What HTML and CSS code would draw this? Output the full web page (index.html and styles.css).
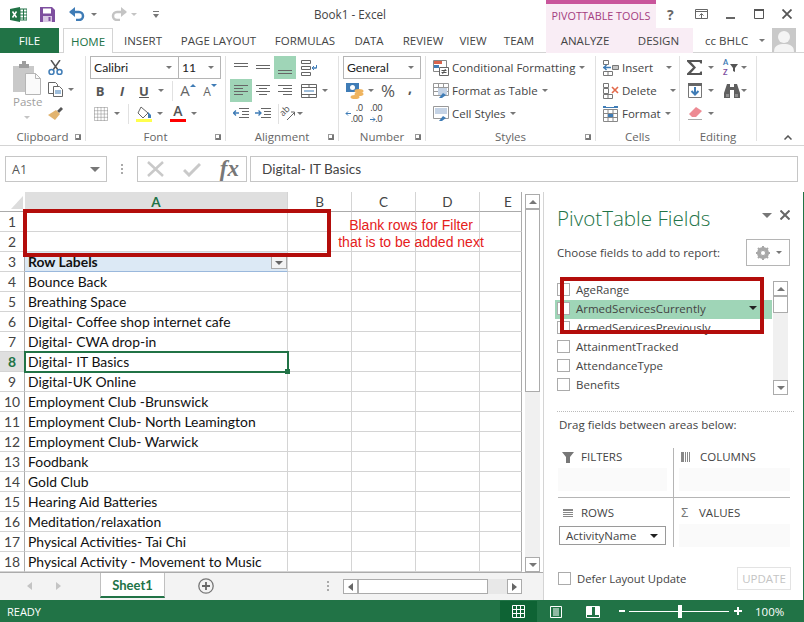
FILE: index.html
```html
<!DOCTYPE html>
<html lang="en">
<head>
<meta charset="utf-8">
<title>Book1 - Excel</title>
<link rel="stylesheet" href="styles.css">
</head>
<body>
<div class="app">
  <header class="titlebar">
    <div class="qat">
      <svg class="q-logo" width="17" height="15" viewBox="0 0 17 15"><path d="M0 2 10 0v15L0 13z" fill="#217346"/><path d="M10 2h7v11h-7z" fill="#fff" stroke="#217346"/><path d="M10 5h7M10 8h7M10 11h7M13.5 2v11" stroke="#217346"/><path d="M2.5 4.5l4 6M6.5 4.5l-4 6" stroke="#fff" stroke-width="1.5"/></svg>
      <svg class="q-save" width="15" height="15" viewBox="0 0 15 15"><path d="M0 0h12l3 3v12H0z" fill="#7e4f9f"/><path d="M3 1.5h8v5H3z" fill="#fff"/><path d="M3 9h9v6H3z" fill="#d9c9e4"/><path d="M8.500 10h2v4h-2z" fill="#7e4f9f"/></svg>
      <svg class="q-undo" width="16" height="14" viewBox="0 0 16 14"><path d="M1.500 5H10a4 4 0 0 1 0 8H7" fill="none" stroke="#3f7cb6" stroke-width="2.500"/><path d="M6 0v10L0 5z" fill="#3f7cb6"/></svg>
      <span class="car q-car1"></span>
      <svg class="q-redo" width="16" height="14" viewBox="0 0 16 14"><path d="M14.500 5H6a4 4 0 0 0 0 8h3" fill="none" stroke="#c4c4c4" stroke-width="2.500"/><path d="M10 0v10l6-5z" fill="#c4c4c4"/></svg>
      <span class="car light q-car2"></span>
      <svg class="q-cust" width="6" height="7" viewBox="0 0 6 7"><path d="M0 0h6v1H0z" fill="#777"/><path d="M0 3h6L3 7z" fill="#777"/></svg>
      <span class="doc-title">Book1 - Excel</span>
    </div>
    <div class="ctx-head"><span>PIVOTTABLE TOOLS</span></div>
    <div class="winctl">
      <span class="help">?</span>
      <svg width="13" height="10" viewBox="0 0 13 10"><path d="M.5.500h12v9H.5zM.5 2.500h12" fill="none" stroke="#666"/><path d="M6.500 9V5M4.500 6.500l2-2 2 2" fill="none" stroke="#666"/></svg>
      <svg width="9" height="10" viewBox="0 0 9 10"><path d="M0 8h9v2H0z" fill="#666"/></svg>
      <svg width="10" height="10" viewBox="0 0 10 10"><path d="M.5.500h9v9h-9z" fill="none" stroke="#555"/><path d="M0 0h10v2H0z" fill="#555"/></svg>
      <svg width="10" height="10" viewBox="0 0 10 10"><path d="M.5.500l9 9M9.500.500l-9 9" stroke="#555" stroke-width="1.800"/></svg>
    </div>
  </header>

  <nav class="tabs">
    <span class="tab file">FILE</span>
    <span></span>
    <span class="tab home">HOME</span>
    <span class="tab">INSERT</span>
    <span class="tab">PAGE LAYOUT</span>
    <span class="tab">FORMULAS</span>
    <span class="tab">DATA</span>
    <span class="tab">REVIEW</span>
    <span class="tab">VIEW</span>
    <span class="tab">TEAM</span>
    <span class="tab ctx">ANALYZE</span>
    <span class="tab ctx">DESIGN</span>
    <div class="account">
      <span>cc BHLC</span><span class="car acc-car"></span>
      <svg width="24" height="24" viewBox="0 0 24 24"><path d="M0 0h24v24H0z" fill="#c9c9c9"/><circle cx="12" cy="9" r="6" fill="#f4f4f4"/><path d="M2 24c0-7 5-8 10-8s10 1 10 8z" fill="#f4f4f4"/></svg>
    </div>
  </nav>

  <section class="ribbon">
    <div class="grp g-clip">
      <div class="body clip">
        <div class="paste">
          <svg width="28" height="34" viewBox="0 0 28 34"><path d="M0 5h21v26H0z" fill="#c9c9c9"/><path d="M6 3h3V0h4v3h3v4H6z" fill="#9d9d9d"/><path d="M12.500 12.500h10l5 5v16h-15z" fill="#fafafa" stroke="#b5b5b5"/><path d="M22.500 12.500v5h5" fill="none" stroke="#b5b5b5"/></svg>
          <span class="paste-l">Paste</span>
          <span class="car light"></span>
        </div>
        <div class="clip-small">
          <svg class="cs1" width="15" height="15" viewBox="0 0 15 15"><path d="M3 0l7 10M12 0L5 10" stroke="#555" stroke-width="1.500"/><circle cx="3.500" cy="12" r="2.500" fill="#fff" stroke="#3f7cb6" stroke-width="1.500"/><circle cx="11.500" cy="12" r="2.500" fill="#fff" stroke="#3f7cb6" stroke-width="1.500"/></svg>
          <div class="cs2"><svg width="15" height="15" viewBox="0 0 15 15"><path d="M.5.500h7l2 2v9h-9z" fill="#fff" stroke="#666"/><path d="M5.500 4.500h6l3 3v7h-9z" fill="#fff" stroke="#666"/><path d="M7 9h6M7 11h6" stroke="#3f7cb6"/></svg><span class="car"></span></div>
          <svg class="cs3" width="16" height="14" viewBox="0 0 16 14"><path d="M9 5l4-4 2 2-4 4z" fill="#555"/><path d="M0 9l8-5 4 4-5 6z" fill="#e2b46f"/></svg>
        </div>
      </div>
      <div class="glabel">Clipboard<span class="launch"></span></div>
    </div>

    <div class="grp g-font">
      <div class="body rows p3">
        <div class="r selects"><span class="sel s-font">Calibri<i class="car"></i></span><span class="sel s-size">11<i class="car"></i></span></div>
        <div class="r">
          <span class="i w22 t-b">B</span><span class="i w22 t-i">I</span><span class="i w22 t-u">U</span><span class="i w12"><i class="car"></i></span><span class="w5"></span><span class="sep"></span><span class="w4"></span>
          <span class="i w22 t-a">A<svg width="6" height="3" viewBox="0 0 6 3"><path d="M0 3h6L3 0z" fill="#3f7cb6"/></svg></span>
          <span class="i w22 t-a small">A<svg width="6" height="3" viewBox="0 0 6 3"><path d="M0 0h6L3 3z" fill="#3f7cb6"/></svg></span>
        </div>
        <div class="r">
          <span class="i w24"><svg width="14" height="14" viewBox="0 0 14 14"><path d="M.5.500h13v13H.5zM.5 7h13M7 .5v13M3.700.5v13M10.300.5v13M.5 3.700h13M.5 10.300h13" fill="none" stroke="#888" stroke-dasharray="1 1"/></svg></span>
          <span class="i w8"><i class="car"></i></span><span class="w7"></span><span class="sep"></span><span class="w7"></span>
          <span class="i w16"><svg width="16" height="16" viewBox="0 0 16 16"><path d="M5 1l7 6-5 5-5-5z" fill="#fff" stroke="#666"/><path d="M12 6l3 3v3h-3z" fill="#3f7cb6"/><path d="M0 13h16v3H0z" fill="#ffff4d"/></svg></span>
          <span class="i w16"><i class="car"></i></span><span class="w2"></span>
          <span class="i w16 fc">A<b></b></span>
          <span class="i w16"><i class="car"></i></span>
        </div>
      </div>
      <div class="glabel">Font<span class="launch"></span></div>
    </div>

    <div class="grp g-align">
      <div class="body rows p4">
        <div class="r">
          <span class="i w22"><svg class="ic" width="14" height="10" viewBox="0 0 14 10"><path d="M0 .5h14M0 3.500h14"/></svg></span>
          <span class="i w22"><svg class="ic" width="14" height="8" viewBox="0 0 14 8"><path d="M0 1.500h14M0 4.500h14"/></svg></span>
          <span class="i w22 on"><svg class="ic mt" width="14" height="8" viewBox="0 0 14 8"><path d="M0 3.500h14M0 6.500h14"/></svg></span>
          <span class="i w26"><svg width="17" height="16" viewBox="0 0 17 16"><path d="M.5.500h9v3h-9zM.5 6.500h9v3h-9zM.5 12.500h9v3h-9z" fill="none" stroke="#666"/><path d="M11 8h4.500v-3M15.500 8H11M13 6l-2 2 2 2" fill="none" stroke="#3f7cb6"/></svg></span>
        </div>
        <div class="r">
          <span class="i w22 on"><svg class="ic" width="14" height="11" viewBox="0 0 14 11"><path d="M0 .5h14M0 3.500h9M0 6.500h14M0 9.500h9"/></svg></span>
          <span class="i w22"><svg class="ic" width="14" height="11" viewBox="0 0 14 11"><path d="M0 .5h14M3 3.500h8M0 6.500h14M3 9.500h8"/></svg></span>
          <span class="i w22"><svg class="ic" width="14" height="11" viewBox="0 0 14 11"><path d="M0 .5h14M5 3.500h9M0 6.500h14M5 9.500h9"/></svg></span>
          <span class="i w26"><svg width="16" height="14" viewBox="0 0 16 14"><path d="M.5.500h15v13H.5zM.5 3.500h15M.5 10.500h15M8 .5v3M8 10.500v3" fill="none" stroke="#666"/><path d="M3 7h10" stroke="#3f7cb6"/></svg></span>
          <span class="i w6"><i class="car"></i></span>
        </div>
        <div class="r">
          <span class="i w22"><svg width="16" height="11" viewBox="0 0 16 11"><path d="M6 .5h10M9 3.500h7M9 6.500h7M6 9.500h10" stroke="#666" fill="none"/><path d="M0 5h6M3 2.500L.5 5 3 7.500" stroke="#3f7cb6" stroke-width="1.300" fill="none"/></svg></span>
          <span class="i w22"><svg width="16" height="11" viewBox="0 0 16 11"><path d="M6 .5h10M9 3.500h7M9 6.500h7M6 9.500h10" stroke="#666" fill="none"/><path d="M0 5h6M3.500 2.500L6 5 3.500 7.500" stroke="#3f7cb6" stroke-width="1.300" fill="none"/></svg></span>
          <span class="w4"></span><span class="sep"></span>
          <span class="i w16 orient-wrap"><span class="orient">ab</span><svg width="16" height="14" viewBox="0 0 16 14"><path d="M8 13l7-7M12 5h3.500v3.500" fill="none" stroke="#666"/></svg></span>
          <span class="i w10"><i class="car"></i></span>
        </div>
      </div>
      <div class="glabel">Alignment<span class="launch"></span></div>
    </div>

    <div class="grp g-num">
      <div class="body rows p4">
        <div class="r"><span class="sel s-num">General<i class="car"></i></span></div>
        <div class="r">
          <span class="i w24"><svg width="18" height="16" viewBox="0 0 18 16"><path d="M0 0h13v9H0z" fill="#3f7cb6"/><circle cx="6.500" cy="4.500" r="2.500" fill="#fff"/><ellipse cx="13" cy="8" rx="4.500" ry="2" fill="#efb45f"/><ellipse cx="13" cy="11" rx="4.500" ry="2" fill="#efb45f"/><ellipse cx="9" cy="14" rx="4.500" ry="2" fill="#efb45f"/></svg></span>
          <span class="i w8"><i class="car"></i></span><span class="w5"></span>
          <span class="i w16 pct">%</span>
          <span class="i w28 comma">,</span>
        </div>
        <div class="r">
          <span class="i w22 dec"><svg width="6" height="5" viewBox="0 0 6 5"><path d="M6 2.500H1M3 .5L1 2.500l2 2" fill="none" stroke="#3f7cb6"/></svg><span class="dec-t"><span>.0</span><span>.00</span></span></span>
          <span class="i w22 dec"><span class="dec-t"><span>.00</span><span><svg width="6" height="5" viewBox="0 0 6 5"><path d="M0 2.500h5M3 .5l2 2-2 2" fill="none" stroke="#3f7cb6"/></svg>.0</span></span></span>
        </div>
      </div>
      <div class="glabel">Number<span class="launch"></span></div>
    </div>

    <div class="grp g-sty">
      <div class="body rows p7">
        <div class="r"><svg class="lic" width="16" height="16" viewBox="0 0 16 16"><path d="M.5.500h13v11H.5z" fill="#fff" stroke="#888"/><path d="M1 1h8v3H1z" fill="#d9634c"/><path d="M1 5h5v3H1z" fill="#3f7cb6"/><path d="M6.500 7.500h9v8h-9z" fill="#fff" stroke="#666"/><path d="M8.500 10.500h5M8.500 12.500h5M12.500 9l-3 5" stroke="#555" fill="none"/></svg><span>Conditional Formatting</span><i class="car c-gap"></i></div>
        <div class="r"><svg class="lic" width="16" height="16" viewBox="0 0 16 16"><path d="M.5.500h15v12H.5zM.5 4.500h15M.5 8.500h15M5.500.5v12M10.500.5v12" fill="#fff" stroke="#999"/><path d="M5 5h9v7H5z" fill="#c5d3e5"/><path d="M6 15l4-5 3 2-4 3z" fill="#3f7cb6"/></svg><span>Format as Table</span><i class="car c-gap"></i></div>
        <div class="r"><svg class="lic" width="16" height="16" viewBox="0 0 16 16"><path d="M.5.500h15v12H.5z" fill="#fff" stroke="#999"/><path d="M2 2h12v6H2z" fill="#c5d3e5"/><path d="M6 15l4-5 3 2-4 3z" fill="#3f7cb6"/></svg><span>Cell Styles</span><i class="car c-gap"></i></div>
      </div>
      <div class="glabel">Styles<span class="launch"></span></div>
    </div>

    <div class="grp g-cells">
      <div class="body rows p7">
        <div class="r"><svg class="lic" width="16" height="16" viewBox="0 0 16 16"><path d="M.5.500h5v4h-5zM.5 11.500h9v4h-9zM5 11.500v4" fill="#fff" stroke="#777"/><path d="M9.500 5.500h6v4h-6z" fill="#c5c5c5" stroke="#777"/><path d="M0 7.500h8M3.500 5L1 7.500 3.500 10" fill="none" stroke="#3f7cb6" stroke-width="1.500"/></svg><span>Insert</span><i class="car c-ins"></i></div>
        <div class="r"><svg class="lic" width="16" height="16" viewBox="0 0 16 16"><path d="M.5.500h5v4h-5zM.5 5.500h5v5h-5zM.5 11.500h9v4h-9zM5 11.500v4" fill="#fff" stroke="#777"/><path d="M9 4l6 6M15 4l-6 6" stroke="#e2694a" stroke-width="1.600"/></svg><span>Delete</span><i class="car c-del"></i></div>
        <div class="r"><svg class="lic" width="16" height="16" viewBox="0 0 16 16"><path d="M0 .5h3M11 .5h4M0 1.500h15" stroke="#3f7cb6"/><path d="M.5 3.500h14v12H.5zM.5 7.500h14M.5 11.500h14M5 3.500v12M10 3.500v12" fill="#fff" stroke="#888"/><path d="M5 8h5v3H5z" fill="#3f7cb6"/></svg><span>Format</span><i class="car c-gap"></i></div>
      </div>
      <div class="glabel">Cells</div>
    </div>

    <div class="grp g-edit">
      <div class="body rows p7">
        <div class="r">
          <span class="i w16"><svg width="16" height="15" viewBox="0 0 16 15"><path d="M0 0h15v3.500h-1.500L12.500 2H4l5 5.500L4 13h8.500l1-1.500H15V15H0v-1.500L6 7.500 0 1.500z" fill="#555"/></svg></span><span class="i w16"><i class="car"></i></span><span class="w4"></span>
          <span class="i w18 sort"><span class="az"><span class="az-a">A</span><span class="az-z">Z</span></span><svg width="8" height="8" viewBox="0 0 8 8"><path d="M0 0h8L5 4v4L3 7V4z" fill="#555"/></svg></span>
          <span class="i w6"><i class="car"></i></span>
        </div>
        <div class="r">
          <span class="i w16"><svg width="14" height="15" viewBox="0 0 14 15"><path d="M.5.500h13v14H.5z" fill="#fff" stroke="#777"/><path d="M0 0h14v3H0z" fill="#666"/><path d="M7 4v7M3.500 8L7 11.500 10.500 8" fill="none" stroke="#3f7cb6" stroke-width="2"/></svg></span>
          <span class="i w16"><i class="car"></i></span><span class="w4"></span>
          <span class="i w18"><svg width="16" height="14" viewBox="0 0 16 14"><path d="M3 0h3v3h4V0h3l3 9v5h-6V6H6v8H0V9z" fill="#5f5f5f"/><path d="M2 10h3v3H2zM11 10h3v3h-3z" fill="#8d8d8d"/></svg></span>
          <span class="i w6"><i class="car"></i></span>
        </div>
        <div class="r">
          <span class="i w16"><svg width="15" height="13" viewBox="0 0 15 13"><path d="M8 0l6 4-6 6H4L1 7z" fill="#ed8a93"/><path d="M0 12.500h14" stroke="#aaa"/></svg></span>
          <span class="i w16"><i class="car"></i></span>
        </div>
      </div>
      <div class="glabel">Editing</div>
    </div>
    <svg class="collapse" width="8" height="5" viewBox="0 0 8 5"><path d="M.5 4.500L4 1l3.500 3.500" fill="none" stroke="#555" stroke-width="1.500"/></svg>
  </section>

  <section class="fbar">
    <div class="namebox"><span>A1</span><i class="car big"></i></div>
    <div class="fdots"><i></i><i></i><i></i></div>
    <div class="fbtns">
      <svg width="17" height="16" viewBox="0 0 17 16"><path d="M1 1l15 14M16 1L1 15" stroke="#c9c9c9" stroke-width="2.500"/></svg>
      <svg width="18" height="15" viewBox="0 0 18 15"><path d="M1 8l5 5L17 2" fill="none" stroke="#c9c9c9" stroke-width="3"/></svg>
      <span class="fx">fx</span>
    </div>
    <div class="finput">Digital- IT Basics</div>
  </section>

  <main class="work">
    <div class="left">
      <div class="sheetrow">
        <div class="grid">
          <div class="cell corner"><svg width="12" height="13" viewBox="0 0 12 13"><path d="M12 0v13H0z" fill="#dcdcdc"/></svg></div>
          <div class="cell ch ch-a">A</div><div class="cell ch">B</div><div class="cell ch">C</div><div class="cell ch">D</div><div class="cell ch last ch-e">E</div>
          <div class="cell rh">1</div><div class="cell"></div><div class="cell"></div><div class="cell"></div><div class="cell"></div><div class="cell last"></div>
          <div class="cell rh">2</div><div class="cell"></div><div class="cell"></div><div class="cell"></div><div class="cell"></div><div class="cell last"></div>
          <div class="cell rh">3</div><div class="cell pvh">Row Labels<span class="fbtn"><i class="car dark"></i></span></div><div class="cell"></div><div class="cell"></div><div class="cell"></div><div class="cell last"></div>
          <div class="cell rh">4</div><div class="cell tx">Bounce Back</div><div class="cell"></div><div class="cell"></div><div class="cell"></div><div class="cell last"></div>
          <div class="cell rh">5</div><div class="cell tx">Breathing Space</div><div class="cell"></div><div class="cell"></div><div class="cell"></div><div class="cell last"></div>
          <div class="cell rh">6</div><div class="cell tx">Digital- Coffee shop internet cafe</div><div class="cell"></div><div class="cell"></div><div class="cell"></div><div class="cell last"></div>
          <div class="cell rh">7</div><div class="cell tx">Digital- CWA drop-in</div><div class="cell"></div><div class="cell"></div><div class="cell"></div><div class="cell last"></div>
          <div class="cell rh rh-on">8</div><div class="cell tx active">Digital- IT Basics<b class="handle"></b></div><div class="cell"></div><div class="cell"></div><div class="cell"></div><div class="cell last"></div>
          <div class="cell rh">9</div><div class="cell tx">Digital-UK Online</div><div class="cell"></div><div class="cell"></div><div class="cell"></div><div class="cell last"></div>
          <div class="cell rh">10</div><div class="cell tx">Employment Club -Brunswick</div><div class="cell"></div><div class="cell"></div><div class="cell"></div><div class="cell last"></div>
          <div class="cell rh">11</div><div class="cell tx">Employment Club- North Leamington</div><div class="cell"></div><div class="cell"></div><div class="cell"></div><div class="cell last"></div>
          <div class="cell rh">12</div><div class="cell tx">Employment Club- Warwick</div><div class="cell"></div><div class="cell"></div><div class="cell"></div><div class="cell last"></div>
          <div class="cell rh">13</div><div class="cell tx">Foodbank</div><div class="cell"></div><div class="cell"></div><div class="cell"></div><div class="cell last"></div>
          <div class="cell rh">14</div><div class="cell tx">Gold Club</div><div class="cell"></div><div class="cell"></div><div class="cell"></div><div class="cell last"></div>
          <div class="cell rh">15</div><div class="cell tx">Hearing Aid Batteries</div><div class="cell"></div><div class="cell"></div><div class="cell"></div><div class="cell last"></div>
          <div class="cell rh">16</div><div class="cell tx">Meditation/relaxation</div><div class="cell"></div><div class="cell"></div><div class="cell"></div><div class="cell last"></div>
          <div class="cell rh">17</div><div class="cell tx">Physical Activities- Tai Chi</div><div class="cell"></div><div class="cell"></div><div class="cell"></div><div class="cell last"></div>
          <div class="cell rh">18</div><div class="cell tx">Physical Activity - Movement to Music</div><div class="cell"></div><div class="cell"></div><div class="cell"></div><div class="cell last"></div>
        </div>
        <div class="vscroll">
          <span class="sbtn"><i class="car up"></i></span>
          <span class="thumb"></span>
          <span class="track"></span>
          <span class="sbtn"><i class="car"></i></span>
        </div>
      </div>
      <div class="sheetbar">
        <svg class="nav1" width="5" height="8" viewBox="0 0 5 8"><path d="M5 0v8L0 4z" fill="#c4c4c4"/></svg>
        <svg class="nav2" width="5" height="8" viewBox="0 0 5 8"><path d="M0 0v8l5-4z" fill="#c4c4c4"/></svg>
        <span class="sheettab">Sheet1</span>
        <svg class="addsheet" width="16" height="16" viewBox="0 0 16 16"><circle cx="8" cy="8" r="7.200" fill="none" stroke="#777" stroke-width="1.300"/><path d="M8 4v8M4 8h8" stroke="#666" stroke-width="1.800"/></svg>
        <div class="sdots"><i></i><i></i><i></i></div>
        <div class="hscroll">
          <span class="hbtn"><svg width="5" height="8" viewBox="0 0 5 8"><path d="M5 0v8L0 4z" fill="#666"/></svg></span>
          <span class="hthumb"></span>
          <span class="htrack"></span>
          <span class="hbtn"><svg width="5" height="8" viewBox="0 0 5 8"><path d="M0 0v8l5-4z" fill="#666"/></svg></span>
        </div>
      </div>
    </div>

    <aside class="panel">
      <div class="p-head"><h1>PivotTable Fields</h1><i class="car big p-car"></i>
        <svg width="10" height="10" viewBox="0 0 10 10"><path d="M.5.500l9 9M9.500.500l-9 9" stroke="#666" stroke-width="2"/></svg></div>
      <div class="p-choose"><span>Choose fields to add to report:</span>
        <span class="gear"><svg width="14" height="14" viewBox="0 0 14 14"><circle cx="7" cy="7" r="4.500" fill="none" stroke="#a8a8a8" stroke-width="3"/><path d="M7 0v14M0 7h14M2 2l10 10M12 2L2 12" stroke="#a8a8a8" stroke-width="2"/><circle cx="7" cy="7" r="2" fill="#fff"/></svg><i class="car"></i></span></div>
      <div class="p-list">
        <div class="flist">
          <div class="fld"><b class="chk"></b>AgeRange</div>
          <div class="fld on"><b class="chk"></b>ArmedServicesCurrently<i class="car dark fld-car"></i></div>
          <div class="fld"><b class="chk"></b>ArmedServicesPreviously</div>
          <div class="fld"><b class="chk"></b>AttainmentTracked</div>
          <div class="fld"><b class="chk"></b>AttendanceType</div>
          <div class="fld"><b class="chk"></b>Benefits</div>
        </div>
        <div class="pscroll">
          <span class="sbtn"><i class="car up"></i></span>
          <span class="pthumb"></span>
          <span class="track"></span>
          <span class="sbtn"><i class="car"></i></span>
        </div>
      </div>
      <div class="p-drag">Drag fields between areas below:</div>
      <div class="areas">
        <div class="area a-tl">
          <div class="a-h"><svg class="a-ic" width="12" height="11" viewBox="0 0 12 11"><path d="M0 0h12L8 5v6H4V5z" fill="#777"/></svg>FILTERS</div>
          <div class="drop"></div>
        </div>
        <div class="area a-tr">
          <div class="a-h"><svg class="a-ic" width="10" height="10" viewBox="0 0 10 10"><path d="M0 0h3v10H0zM4 0h1v10H4zM6 0h1v10H6zM8 0h1v10H8z" fill="#888"/></svg>COLUMNS</div>
          <div class="drop"></div>
        </div>
        <div class="area a-bl">
          <div class="a-h"><svg class="a-ic" width="10" height="8" viewBox="0 0 10 8"><path d="M0 0h10v2H0zM0 3h10v1H0zM0 5h10v1H0zM0 7h10v1H0z" fill="#888"/></svg>ROWS</div>
          <div class="adrop"><span>ActivityName</span><i class="car dark"></i></div>
        </div>
        <div class="area a-br">
          <div class="a-h"><span class="a-sig">&#931;</span>VALUES</div>
          <div class="drop d2"></div>
        </div>
      </div>
      <div class="p-foot"><b class="chk"></b><span>Defer Layout Update</span><span class="update">UPDATE</span></div>
    </aside>
  </main>

  <footer class="status">
    <span class="ready">READY</span>
    <span class="v-btn v-on"><svg width="13" height="13" viewBox="0 0 13 13"><path d="M.5.500h12v12H.5zM.5 4.500h12M.5 8.500h12M4.500.5v12M8.500.5v12" fill="none" stroke="#fff"/></svg></span>
    <span class="v-btn"><svg width="12" height="12" viewBox="0 0 12 12"><path d="M.5.500h11v11H.5z" fill="none" stroke="#fff"/><path d="M3 3h6M3 5h6M3 7h6M3 9h6" stroke="#fff"/></svg></span>
    <span class="v-btn"><svg width="14" height="12" viewBox="0 0 14 12"><path d="M.5.500h13v11H.5z" fill="none" stroke="#fff"/><path d="M1 1h5v8H1zM9 1h4v8H9z" fill="#fff"/></svg></span>
    <span class="zminus"></span>
    <span class="slider"><b></b></span>
    <span class="zplus"></span>
    <span class="zoom">100%</span>
  </footer>

  <div class="redbox rb1"></div>
  <div class="redbox rb2"></div>
  <div class="note">Blank rows for Filter<br>that is to be added next</div>
</div>
</body>
</html>
```
FILE: styles.css
```css
* { box-sizing: border-box; }
html, body { margin: 0; padding: 0; background: #fff; }
body { font-family: "Open Sans", "Liberation Sans", sans-serif; font-size: 11.5px; color: #444; }
i { font-style: normal; }
.app { position: relative; width: 804px; height: 622px; display: flex; flex-direction: column; overflow: hidden; background: #fff; }

.car { display: inline-block; width: 0; height: 0; border-left: 3px solid transparent; border-right: 3px solid transparent; border-top: 3px solid #777; flex: none; }
.car.light { border-top-color: #c4c4c4; }
.car.big { border-left-width: 5px; border-right-width: 5px; border-top-width: 5px; }
.car.dark { border-left-width: 4px; border-right-width: 4px; border-top: 4px solid #222; }
.car.up { border-top: 0; border-bottom: 4px solid #777; border-left-width: 4px; border-right-width: 4px; }
.sbtn .car:not(.up) { border-left-width: 4px; border-right-width: 4px; border-top-width: 4px; }

.titlebar { height: 28px; display: flex; flex: none; }
.qat { width: 546px; display: flex; align-items: center; padding-left: 10px; }
.q-save { margin-left: 13px; }
.q-undo { margin-left: 14px; }
.q-car1 { margin-left: 6px; }
.q-redo { margin-left: 14px; }
.q-car2 { margin-left: 4px; }
.q-cust { margin-left: 16px; }
.doc-title { margin-left: 155px; font-size: 11.700px; color: #444; }
.ctx-head { width: 110px; background: #f9edf5; border-top: 4px solid #c9559b; display: flex; align-items: center; justify-content: center; color: #a43d80; font-size: 10.800px; padding-bottom: 1px; }
.winctl { flex: 1; display: flex; align-items: center; padding-left: 11px; padding-right: 12px; justify-content: space-between; }
.help { font-weight: 700; font-size: 14px; color: #666; width: 9px; }

.tabs { height: 25px; flex: none; display: grid; grid-template-columns: 59px 4px 50px 60px 91px 82px 46px 62px 38px 54px 78px 69px 1fr; border-bottom: 1px solid #d4d4d4; }
.tab { display: flex; align-items: center; justify-content: center; font-size: 11.500px; color: #444; }
.tab.file { background: #217346; color: #fff; height: 25px; }
.tab.home { color: #217346; background: #fff; border: 1px solid #d4d4d4; border-bottom: 0; height: 25px; }
.tab.ctx { background: #f9edf5; }
.account { display: flex; align-items: center; padding-left: 12px; font-size: 11.500px; height: 24px; }
.acc-car { margin-left: 11px; margin-right: 7px; }

.ribbon { height: 93px; flex: none; display: flex; border-bottom: 1px solid #d4d4d4; padding-top: 3px; position: relative; }
.grp { display: flex; flex-direction: column; border-right: 1px solid #e1e1e1; height: 85px; flex: none; }
.g-clip { width: 86px; }
.g-font { width: 140px; }
.g-align { width: 113px; }
.g-num { width: 87px; }
.g-sty { width: 170px; }
.g-cells { width: 84px; }
.g-edit { width: 77px; }
.body { height: 71px; flex: none; }
.glabel { flex: none; height: 14px; margin-top: 3px; position: relative; display: flex; align-items: center; justify-content: center; color: #666; font-size: 11.500px; line-height: 14px; }
.launch { position: absolute; right: 4px; top: 4px; width: 6px; height: 6px; border-left: 1px solid #999; border-top: 1px solid #999; box-shadow: inset -2px -2px 0 #777; }
.rows { display: flex; flex-direction: column; }
.p3 { padding-left: 3px; }
.p4 { padding-left: 4px; }
.p7 { padding-left: 7px; }
.r { height: 23px; display: flex; align-items: center; flex: none; font-size: 11.500px; }
.i { display: inline-flex; align-items: center; justify-content: center; height: 23px; flex: none; }
.w2 { width: 2px; flex: none; } .w4 { width: 4px; flex: none; } .w5 { width: 5px; flex: none; } .w6 { width: 6px; } .w7 { width: 7px; flex: none; } .w8 { width: 8px; } .w10 { width: 10px; } .w12 { width: 12px; } .w16 { width: 16px; } .w18 { width: 18px; } .w22 { width: 22px; } .w24 { width: 24px; } .w26 { width: 26px; } .w28 { width: 28px; }
.sep { width: 1px; height: 20px; background: #e1e1e1; flex: none; }
.on { background: #9fd5b7; }
.ic { fill: none; stroke: #666; stroke-width: 1; }
.mt { margin-top: 6px; }
.orient-wrap { position: relative; }
.orient { position: absolute; left: 0; top: 3px; font-size: 9px; line-height: 11px; color: #555; transform: rotate(-45deg); }

.clip { display: flex; }
.paste { width: 46px; padding-left: 13px; display: flex; flex-direction: column; align-items: flex-start; padding-top: 5px; }
.paste-l { color: #a0a0a0; font-size: 11.500px; margin-top: 0; width: 28px; text-align: center; line-height: 14px; }
.paste .car { margin-left: 11px; margin-top: 7px; }
.clip-small { display: flex; flex-direction: column; padding-left: 2px; }
.cs1 { margin-top: 4px; }
.cs2 { display: flex; align-items: center; margin-top: 7px; height: 15px; }
.cs2 .car { margin-left: 5px; }
.cs3 { margin-top: 9px; }

.selects { height: 23px; }
.sel { display: flex; align-items: center; justify-content: space-between; height: 23px; border: 1px solid #b5b5b5; padding: 0 6px 0 3px; font-family: Lato, sans-serif; font-size: 12.200px; color: #222; }
.s-font { margin-left: 1px; width: 89px; }
.s-size { width: 43px; margin-left: -1px; }
.s-num { width: 78px; }
.t-b { font-weight: 700; color: #555; font-size: 13px; }
.t-i { font-style: italic; color: #555; font-size: 13px; font-weight: 700; }
.t-u { text-decoration: underline; color: #555; font-size: 13px; font-weight: 700; }
.t-a { color: #666; font-size: 15px; align-items: flex-start; gap: 0; line-height: 23px; }
.t-a svg { margin-top: 5px; }
.t-a.small { font-size: 12px; line-height: 25px; }
.fc { position: relative; color: #555; font-size: 14px; font-weight: 600; line-height: 14px; align-items: flex-start; padding-top: 2px; }
.fc b { position: absolute; left: 0; right: 0; bottom: 3px; height: 3px; background: #f00; }
.pct { font-size: 17px; color: #555; }
.comma { font-weight: 700; color: #555; font-size: 14px; padding-bottom: 6px; }
.dec { font-family: Lato, sans-serif; font-size: 8.500px; color: #444; }
.dec-t { display: flex; flex-direction: column; line-height: 10.500px; align-items: flex-end; }
.lic { margin-right: 3px; flex: none; }
.c-gap { margin-left: 4px; }
.c-ins { margin-left: 13px; }
.c-del { margin-left: 13px; }
.sort { gap: 2px; justify-content: flex-start; }
.az { display: flex; flex-direction: column; font-family: Lato, sans-serif; font-size: 7.500px; line-height: 9.500px; font-weight: 700; }
.az-a { color: #3f7cb6; }
.az-z { color: #7e4f9f; }
.collapse { position: absolute; left: 784px; top: 82px; }

.fbar { height: 46px; flex: none; display: flex; padding: 10px 6px 10px 5px; align-items: stretch; }
.namebox { width: 102px; border: 1px solid #c6c6c6; display: flex; align-items: center; justify-content: space-between; padding: 0 6px; font-size: 12.500px; color: #555; }
.fdots { width: 30px; display: flex; flex-direction: column; align-items: center; justify-content: center; gap: 2px; }
.fdots i, .sdots i { width: 2px; height: 2px; background: #aaa; display: block; }
.fbtns { width: 110px; border: 1px solid #c6c6c6; display: flex; align-items: center; padding: 0 7px 0 9px; justify-content: space-between; }
.fx { font-family: "Liberation Serif", serif; font-style: italic; font-weight: 700; font-size: 23px; color: #777; line-height: 24px; }
.finput { flex: 1; margin-left: 3px; border: 1px solid #c6c6c6; display: flex; align-items: center; padding-left: 11px; font-family: Lato, sans-serif; font-size: 13.600px; color: #444; }

.work { flex: 1; display: flex; min-height: 0; }
.left { width: 543px; display: flex; flex-direction: column; flex: none; }
.sheetrow { height: 380px; display: flex; overflow: hidden; }
.grid { width: 522px; height: 380px; display: grid; grid-template-columns: 25px 263px 64px 64px 64px 42px; grid-auto-rows: 20px; overflow: hidden; font-family: Lato, sans-serif; flex: none; }
.cell { border-right: 1px solid #d4d4d4; border-bottom: 1px solid #d4d4d4; position: relative; line-height: 20px; font-size: 13.900px; color: #111; white-space: nowrap; }
.cell.last { border-right: 1px solid #ababab; }
.corner { display: flex; justify-content: flex-end; padding: 4px 2px 0 0; border-right: 0; border-bottom: 1px solid #ababab; }
.ch { text-align: center; font-size: 13.500px; color: #444; border-bottom: 1px solid #ababab; line-height: 21px; }
.ch-a { background: #dfdfdf; color: #217346; font-weight: 700; }
.ch-e { padding-left: 24px; text-align: left; border-right: 0; }
.rh { text-align: center; color: #444; border-right: 1px solid #ababab; }
.rh-on { background: #dfdfdf; color: #217346; font-weight: 700; }
.tx { padding-left: 3px; }
.pvh { background: #dce9f5; border-bottom: 1px solid #9ab8dc; font-weight: 700; padding-left: 3px; }
.fbtn { position: absolute; right: 0; top: 4px; width: 16px; height: 13px; background: #f3f3f3; border: 1px solid #aaa; display: flex; align-items: center; justify-content: center; }
.fbtn .car { border-top-color: #666; }
.active { outline: 2px solid #217346; outline-offset: -1px; z-index: 1; }
.handle { position: absolute; right: -3px; bottom: -3px; width: 5px; height: 5px; background: #217346; border: 0; }
.vscroll { width: 15px; margin-left: 3px; padding-top: 2px; display: flex; flex-direction: column; flex: none; }
.sbtn { height: 15px; flex: none; border: 1px solid #ababab; display: flex; align-items: center; justify-content: center; background: #fff; }
.thumb { height: 183px; flex: none; border: 1px solid #ababab; background: #fff; }
.track { flex: 1; background: #f0f0f0; }

.sheetbar { flex: 1; background: #f3f3f3; border-top: 1px solid #ababab; display: flex; align-items: flex-start; }
.nav1 { margin-left: 27px; margin-top: 9px; }
.nav2 { margin-left: 24px; margin-top: 9px; }
.sheettab { margin-left: 39px; width: 65px; height: 25px; background: #fff; border: 1px solid #c0c0c0; border-top: 0; border-bottom: 2px solid #217346; color: #217346; font-family: Lato, sans-serif; font-weight: 700; font-size: 13px; display: flex; align-items: center; justify-content: center; }
.addsheet { margin-left: 33px; margin-top: 5px; }
.sdots { margin-left: 113px; margin-top: 8px; display: flex; flex-direction: column; gap: 2px; }
.hscroll { margin-left: 14px; margin-top: 6px; width: 179px; height: 15px; display: flex; }
.hbtn { width: 15px; border: 1px solid #ababab; background: #fff; display: flex; align-items: center; justify-content: center; flex: none; }
.hthumb { width: 130px; border: 1px solid #ababab; background: #fff; flex: none; }
.htrack { flex: 1; background: #e8e8e8; }

.panel { flex: 1; border-left: 1px solid #d4d4d4; border-right: 1px solid #217346; display: flex; flex-direction: column; padding-left: 13px; }
.p-head { display: flex; align-items: center; height: 28px; margin-top: 12px; padding-right: 13px; }
.p-head h1 { margin: 0; font-weight: 300; font-size: 20.600px; color: #217346; flex: 1; line-height: 28px; white-space: nowrap; }
.p-car { margin-right: 8px; margin-top: -6px; }
.p-head svg { margin-top: -6px; }
.p-choose { display: flex; align-items: center; justify-content: space-between; height: 27px; margin-top: 7px; padding-right: 13px; font-size: 11.500px; }
.gear { width: 44px; height: 27px; border: 1px solid #b5b5b5; display: flex; align-items: center; justify-content: space-between; padding: 0 7px 0 9px; }
.p-list { display: flex; margin-top: 15px; margin-left: -2px; padding-right: 14px; height: 114px; }
.flist { width: 217px; flex: none; }
.fld { height: 19px; display: flex; align-items: center; padding: 0 0 2px 2px; font-size: 11.500px; position: relative; white-space: nowrap; overflow: visible; }
.fld.on { background: #9fd5b7; }
.chk { width: 13px; height: 13px; border: 1px solid #ababab; background: #fff; margin-right: 6px; flex: none; display: block; }
.fld-car { position: absolute; left: 194px; top: 6px; }
.pscroll { width: 15px; margin-left: 1px; display: flex; flex-direction: column; flex: none; }
.pthumb { height: 17px; border: 1px solid #ababab; background: #fff; flex: none; }
.p-drag { margin-top: 16px; margin-left: 0; padding: 5px 0 0 2px; border-top: 1px dotted #bbb; margin-right: 9px; font-size: 11.500px; height: 24px; line-height: 16px; }
.areas { margin-top: 13px; margin-left: 1px; width: 232px; display: grid; grid-template-columns: 116px 116px; grid-template-rows: 50px 49px; }
.area { display: flex; flex-direction: column; }
.a-tl { border-right: 1px solid #b5b5b5; border-bottom: 1px solid #b5b5b5; }
.a-tr { border-bottom: 1px solid #b5b5b5; padding-left: 5px; }
.a-bl { border-right: 1px solid #b5b5b5; padding-top: 6px; }
.a-br { padding-top: 6px; padding-left: 5px; }
.a-h { height: 18px; display: flex; align-items: center; font-size: 11.500px; line-height: 18px; }
.a-ic { margin-left: 4px; margin-right: 7px; }
.a-tl .a-ic { margin-left: 4px; margin-right: 7px; }
.a-tr .a-h, .a-br .a-h { padding-left: 2px; }
.a-tr .a-ic { margin-left: 0; margin-right: 9px; }
.a-bl .a-ic { margin-left: 5px; margin-right: 8px; }
.a-sig { width: 18px; color: #777; font-family: "Liberation Sans", sans-serif; font-size: 12px; }
.drop { height: 23px; margin-top: 2px; margin-right: 6px; background: #fafafa; }
.a-tr .drop { margin-right: 0; }
.d2 { margin-top: 2px; margin-right: 0; }
.adrop { width: 107px; height: 19px; margin: 4px 0 0 1px; border: 1px solid #9a9a9a; display: flex; align-items: center; justify-content: space-between; padding: 0 7px 0 6px; font-size: 11.500px; }
.p-foot { display: flex; align-items: center; height: 23px; margin-top: 20px; margin-left: 1px; padding-right: 12px; }
.p-foot .chk { margin-right: 6px; }
.p-foot > span:nth-child(2) { font-size: 11.300px; }
.update { margin-left: auto; width: 54px; height: 23px; border: 1px solid #e3e3e3; color: #c4c4c4; display: flex; align-items: center; justify-content: center; font-size: 11.500px; }

.status { height: 22px; flex: none; background: #217346; color: #fff; display: flex; align-items: center; font-size: 11px; position: relative; }
.ready { padding-left: 7px; width: 500px; flex: none; }
.v-btn { width: 37px; height: 21px; margin-top: 1px; display: flex; align-items: center; justify-content: center; flex: none; }
.v-on { background: #0e6334; }
.zminus { width: 6px; height: 2px; background: #fff; margin-left: 8px; flex: none; }
.slider { width: 100px; height: 1px; background: #fff; margin-left: 4px; position: relative; flex: none; }
.slider b { position: absolute; left: 49px; top: -6px; width: 4px; height: 13px; background: #fff; }
.zplus { width: 8px; height: 8px; margin-left: 5px; flex: none; background: linear-gradient(#fff,#fff) center/8px 2px no-repeat, linear-gradient(#fff,#fff) center/2px 8px no-repeat; }
.zoom { margin-left: 13px; font-size: 11.500px; }

.redbox { position: absolute; border: 4px solid #b30d0b; pointer-events: none; }
.rb1 { left: 23px; top: 209px; width: 308px; height: 48px; }
.rb2 { left: 560px; top: 277px; width: 204px; height: 57px; }
.note { position: absolute; left: 331px; top: 217px; width: 160px; text-align: center; font-family: "Liberation Sans", sans-serif; font-size: 14px; line-height: 17px; color: #e5201b; }
```
